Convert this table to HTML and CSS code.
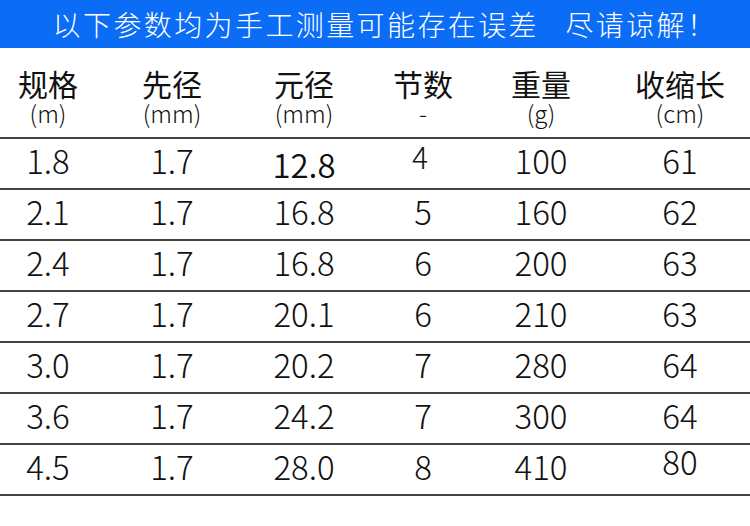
FILE: index.html
```html
<!DOCTYPE html>
<html lang="zh">
<head>
<meta charset="utf-8">
<link rel="stylesheet" href="styles.css">
</head>
<body>
<div class="banner">以下参数均为手工测量可能存在误差<span class="gap">　</span>尽请谅解！</div>
<div class="table">
  <div class="row head">
    <div class="cell"><span class="label">规格</span><span class="unit">(m)</span></div>
    <div class="cell"><span class="label">先径</span><span class="unit">(mm)</span></div>
    <div class="cell"><span class="label">元径</span><span class="unit">(mm)</span></div>
    <div class="cell"><span class="label">节数</span><span class="unit">-</span></div>
    <div class="cell"><span class="label">重量</span><span class="unit">(g)</span></div>
    <div class="cell last"><span class="label">收缩长</span><span class="unit">(cm)</span></div>
  </div>
  <div class="row"><div class="cell">1.8</div><div class="cell">1.7</div><div class="cell lower">12.8</div><div class="cell up">4</div><div class="cell">100</div><div class="cell last">61</div></div>
  <div class="row"><div class="cell">2.1</div><div class="cell">1.7</div><div class="cell">16.8</div><div class="cell">5</div><div class="cell">160</div><div class="cell last">62</div></div>
  <div class="row"><div class="cell">2.4</div><div class="cell">1.7</div><div class="cell">16.8</div><div class="cell">6</div><div class="cell">200</div><div class="cell last">63</div></div>
  <div class="row"><div class="cell">2.7</div><div class="cell">1.7</div><div class="cell">20.1</div><div class="cell">6</div><div class="cell">210</div><div class="cell last">63</div></div>
  <div class="row"><div class="cell">3.0</div><div class="cell">1.7</div><div class="cell">20.2</div><div class="cell">7</div><div class="cell">280</div><div class="cell last">64</div></div>
  <div class="row"><div class="cell">3.6</div><div class="cell">1.7</div><div class="cell">24.2</div><div class="cell">7</div><div class="cell">300</div><div class="cell last">64</div></div>
  <div class="row"><div class="cell">4.5</div><div class="cell">1.7</div><div class="cell">28.0</div><div class="cell">8</div><div class="cell">410</div><div class="cell last higher">80</div></div>
</div>
</body>
</html>
```
FILE: styles.css
```css
html, body {
  margin: 0;
  padding: 0;
  background: #ffffff;
}
body {
  width: 750px;
  height: 526px;
  overflow: hidden;
  font-family: "Noto Sans CJK SC", "Noto Sans", sans-serif;
  color: #111111;
}
.banner {
  height: 48px;
  background: #0b6cf6;
  color: #ffffff;
  font-size: 28px;
  font-weight: 300;
  line-height: 48px;
  text-align: center;
  letter-spacing: 2.4px;
  padding-left: 20px;
}
.banner .gap {
  letter-spacing: -1.6px;
}
.table {
  display: flex;
  flex-direction: column;
}
.row {
  display: grid;
  grid-template-columns: 96px 152px 112px 126px 110px 154px;
  height: 49px;
  border-bottom: 2px solid #444444;
}
.row .cell {
  text-align: center;
  font-size: 33px;
  font-weight: 300;
  line-height: 43px;
  padding-bottom: 6px;
}
.row .cell.last {
  padding-left: 14px;
}
.row .cell.lower {
  padding-top: 4px;
  padding-bottom: 2px;
  font-weight: 350;
}
.row .cell.higher {
  line-height: 33px;
}
.row .cell.up {
  font-size: 30px;
  line-height: 35px;
  padding-right: 6px;
}
.row.head {
  height: auto;
  padding-top: 20px;
  padding-bottom: 11px;
}
.row.head .cell {
  display: flex;
  flex-direction: column;
  align-items: center;
  padding-bottom: 0;
  line-height: normal;
}
.label {
  font-size: 30px;
  line-height: 31px;
  font-weight: 400;
}
.unit {
  font-size: 24px;
  line-height: 26px;
  margin-top: 1px;
  font-weight: 300;
}
```
